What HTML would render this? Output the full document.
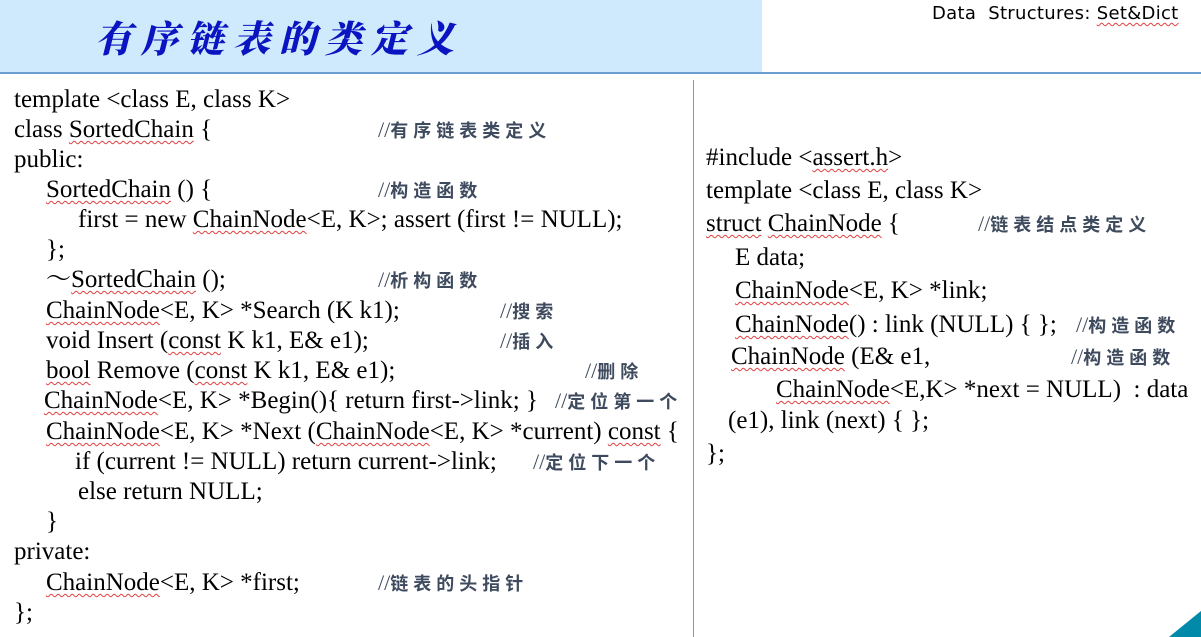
<!DOCTYPE html>
<html><head><meta charset="utf-8"><style>
html,body{margin:0;padding:0;background:#fff;}
body{width:1201px;height:637px;position:relative;overflow:hidden;font-family:"Liberation Serif","Noto Serif CJK SC",serif;color:#000;}
.hdr{position:absolute;left:0;top:0;width:762px;height:72px;background:#cfeafc;}
.hl{position:absolute;left:0;top:72px;width:1201px;height:2px;background:#6a9fd0;}
.vl{position:absolute;left:693px;top:80px;width:1px;height:557px;background:#6a9fd0;}
.title{position:absolute;left:95px;top:9px;font-family:"Noto Serif CJK SC",serif;font-weight:900;font-size:37px;color:#0a14c0;letter-spacing:9px;font-style:italic;}
.ds{position:absolute;left:932px;top:3px;font-family:"DejaVu Sans",sans-serif;font-size:18px;color:#000;letter-spacing:0.3px;}
.l{position:absolute;font-size:25px;white-space:pre;line-height:28px;}
.c{position:absolute;font-family:"Liberation Sans","Noto Sans CJK SC",sans-serif;font-weight:bold;font-size:18px;letter-spacing:5px;color:#3e4a5e;white-space:pre;line-height:22px;}
.c i{font-style:normal;font-weight:normal;font-family:"Liberation Serif",serif;font-size:22px;letter-spacing:0;}
u{text-decoration:underline wavy #e04040;text-decoration-thickness:1px;text-underline-offset:3px;}
.tri{position:absolute;right:0;bottom:0;width:0;height:0;border-style:solid;border-width:0 0 26px 32px;border-color:transparent transparent #0089a8 transparent;}
</style></head><body>
<div class="hdr"></div><div class="hl"></div><div class="vl"></div>
<div class="title">有序链表的类定义</div>
<div class="ds">Data&nbsp; Structures: <u>Set&amp;Dict</u></div>

<div class="l" style="left:14px;top:86px">template &lt;class E, class K&gt;</div>
<div class="l" style="left:14px;top:116px">class <u>SortedChain</u> {</div>
<div class="c" style="left:378px;top:119px"><i>//</i>有序链表类定义</div>
<div class="l" style="left:14px;top:146px">public:</div>
<div class="l" style="left:46px;top:176px"><u>SortedChain</u> () {</div>
<div class="c" style="left:378px;top:179px"><i>//</i>构造函数</div>
<div class="l" style="left:78px;top:206px">first = new <u>ChainNode</u>&lt;E, K&gt;; assert (first != NULL);</div>
<div class="l" style="left:46px;top:236px">};</div>
<div class="l" style="left:46px;top:266px">～<u>SortedChain</u> ();</div>
<div class="c" style="left:378px;top:269px"><i>//</i>析构函数</div>
<div class="l" style="left:46px;top:297px"><u>ChainNode</u>&lt;E, K&gt; *Search (K k1);</div>
<div class="c" style="left:500px;top:300px"><i>//</i>搜索</div>
<div class="l" style="left:46px;top:327px">void Insert (<u>const</u> K k1, E&amp; e1);</div>
<div class="c" style="left:500px;top:330px"><i>//</i>插入</div>
<div class="l" style="left:46px;top:357px"><u>bool</u> Remove (<u>const</u> K k1, E&amp; e1);</div>
<div class="c" style="left:585px;top:360px"><i>//</i>删除</div>
<div class="l" style="left:44px;top:387px"><u>ChainNode</u>&lt;E, K&gt; *Begin(){ return first-&gt;link; }</div>
<div class="c" style="left:555px;top:390px"><i>//</i>定位第一个</div>
<div class="l" style="left:46px;top:418px"><u>ChainNode</u>&lt;E, K&gt; *Next (<u>ChainNode</u>&lt;E, K&gt; *current) <u>const</u> {</div>
<div class="l" style="left:75px;top:448px">if (current != NULL) return current-&gt;link;</div>
<div class="c" style="left:533px;top:451px"><i>//</i>定位下一个</div>
<div class="l" style="left:78px;top:478px">else return NULL;</div>
<div class="l" style="left:46px;top:508px">}</div>
<div class="l" style="left:14px;top:538px">private:</div>
<div class="l" style="left:46px;top:569px"><u>ChainNode</u>&lt;E, K&gt; *first;</div>
<div class="c" style="left:378px;top:572px"><i>//</i>链表的头指针</div>
<div class="l" style="left:14px;top:599px">};</div>

<div class="l" style="left:706px;top:144px">#include &lt;<u>assert.h</u>&gt;</div>
<div class="l" style="left:706px;top:177px">template &lt;class E, class K&gt;</div>
<div class="l" style="left:706px;top:210px"><u>struct</u> <u>ChainNode</u> {</div>
<div class="c" style="left:978px;top:213px"><i>//</i>链表结点类定义</div>
<div class="l" style="left:735px;top:244px">E data;</div>
<div class="l" style="left:735px;top:277px"><u>ChainNode</u>&lt;E, K&gt; *link;</div>
<div class="l" style="left:735px;top:311px"><u>ChainNode</u>() : link (NULL) { };</div>
<div class="c" style="left:1076px;top:314px"><i>//</i>构造函数</div>
<div class="l" style="left:731px;top:343px"><u>ChainNode</u> (E&amp; e1,</div>
<div class="c" style="left:1071px;top:346px"><i>//</i>构造函数</div>
<div class="l" style="left:776px;top:376px"><u>ChainNode</u>&lt;E,K&gt; *next = NULL)&nbsp; : data</div>
<div class="l" style="left:728px;top:407px">(e1), link (next) { };</div>
<div class="l" style="left:706px;top:440px">};</div>
<div class="tri"></div>
</body></html>
